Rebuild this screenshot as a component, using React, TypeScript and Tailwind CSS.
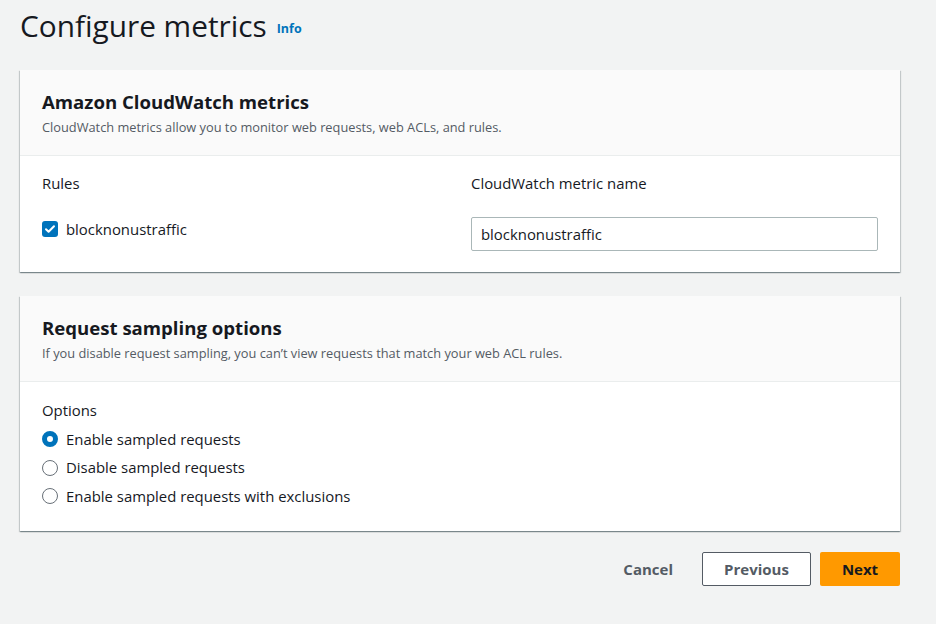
import React from "react";

const font = { fontFamily: "'Open Sans', 'Noto Sans', sans-serif" };

const Card = ({ title, desc, children }: { title: string; desc: string; children: React.ReactNode }) => (
  <div className="bg-white shadow-[0_1px_1px_0_rgba(0,28,36,0.3),1px_1px_1px_0_rgba(0,28,36,0.15),-1px_1px_1px_0_rgba(0,28,36,0.15)]">
    <div className="bg-[#fafafa] border-b border-[#eaeded] px-[22px] pt-[21px] pb-[20px]">
      <h2 className="text-[18.6px] leading-[22px] font-bold text-[#16191f]">{title}</h2>
      <p className="mt-[6px] text-[12.8px] leading-[16px] text-[#545b64]">{desc}</p>
    </div>
    {children}
  </div>
);

const Radio = ({ label, checked }: { label: string; checked?: boolean }) => (
  <label className="flex items-center gap-[8px] h-[20px]">
    {checked ? (
      <span className="w-[16px] h-[16px] rounded-full border-[5px] border-[#0073bb] bg-white" />
    ) : (
      <span className="w-[16px] h-[16px] rounded-full border-[1.5px] border-[#687078] bg-white" />
    )}
    <span className="text-[14.9px] text-[#16191f]">{label}</span>
  </label>
);

const App = () => {
  return (
    <div className="min-h-screen bg-[#f2f3f3] px-[20px] pt-[5px]" style={font}>
      <div className="flex items-end gap-[10px] h-[40px]">
        <h1 className="text-[29.8px] leading-[38px] text-[#16191f]">Configure metrics</h1>
        <a className="text-[12.5px] font-bold text-[#0073bb] mb-[6px]">Info</a>
      </div>

      <div className="mt-[25px] mr-[16px] flex flex-col gap-[24px]">
        <Card
          title="Amazon CloudWatch metrics"
          desc="CloudWatch metrics allow you to monitor web requests, web ACLs, and rules."
        >
          <div className="grid grid-cols-2 gap-x-[22px] px-[22px] pt-[17px] pb-[21px]">
            <div>
              <div className="text-[14.9px] leading-[20px] text-[#16191f]">Rules</div>
              <div className="mt-[25px] flex items-center gap-[8px]">
                <span className="w-[16px] h-[16px] rounded-[3px] bg-[#0073bb] flex items-center justify-center">
                  <svg width="12" height="12" viewBox="0 0 12 12" fill="none">
                    <path d="M2 6.2l2.6 2.6L10 3.2" stroke="white" strokeWidth="2" strokeLinecap="round" strokeLinejoin="round" />
                  </svg>
                </span>
                <span className="text-[14.9px] text-[#16191f]">blocknonustraffic</span>
              </div>
            </div>
            <div>
              <div className="text-[14.9px] leading-[20px] text-[#16191f]">CloudWatch metric name</div>
              <div className="mt-[24px] h-[34px] border border-[#aab7b8] rounded-[2px] bg-white px-[9px] flex items-center text-[14.9px] text-[#16191f]">
                blocknonustraffic
              </div>
            </div>
          </div>
        </Card>

        <Card
          title="Request sampling options"
          desc="If you disable request sampling, you can’t view requests that match your web ACL rules."
        >
          <div className="px-[22px] pt-[18px] pb-[25px]">
            <div className="text-[14.9px] leading-[20px] text-[#16191f]">Options</div>
            <div className="mt-[9px] flex flex-col gap-[8.5px]">
              <Radio label="Enable sampled requests" checked />
              <Radio label="Disable sampled requests" />
              <Radio label="Enable sampled requests with exclusions" />
            </div>
          </div>
        </Card>
      </div>

      <div className="mt-[21px] mr-[16px] flex justify-end items-center gap-[9px]">
        <button className="h-[34px] px-[20px] text-[15px] font-bold text-[#545b64]">Cancel</button>
        <button className="h-[34px] w-[109px] border border-[#545b64] rounded-[2px] bg-white text-[15px] font-bold text-[#545b64]">
          Previous
        </button>
        <button className="h-[34px] w-[80px] rounded-[2px] bg-[#ff9900] text-[15px] font-bold text-[#16191f]">
          Next
        </button>
      </div>
    </div>
  );
};

export default App;
